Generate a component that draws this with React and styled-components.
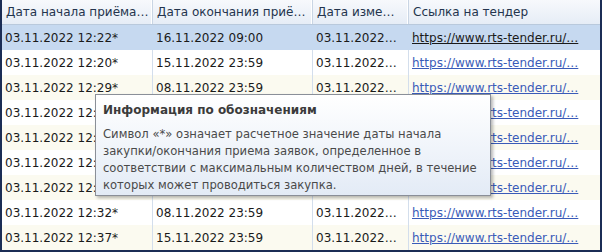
import React from "react";
import styled, { createGlobalStyle } from "styled-components";

const Global = createGlobalStyle`
  html, body { margin: 0; padding: 0; background: #fff; }
  body { font-family: "DejaVu Sans", Verdana, sans-serif; }
`;

const Frame = styled.div`
  position: relative;
  width: 602px;
  height: 252px;
  box-sizing: border-box;
  border: 2px solid #1b2d55;
  border-top: none;
  overflow: hidden;
  background: #fff;
`;

const COLS = "151px 160px 96px 1fr";

const HeaderRow = styled.div`
  display: grid;
  grid-template-columns: ${COLS};
  height: 24px;
  background: linear-gradient(#f7f9fc, #e6edf6);
  border-bottom: 1px solid #b9c9dc;
`;

const HeaderCell = styled.div`
  display: flex;
  align-items: center;
  padding-left: 4px;
  font-size: 12px;
  color: #24344d;
  white-space: nowrap;
  overflow: hidden;
  border-right: 1px solid #c9d5e4;
  box-shadow: inset -1px 0 0 #fff;
  &:last-child { border-right: none; box-shadow: none; }
`;

const Row = styled.div`
  display: grid;
  grid-template-columns: ${COLS};
  height: 25px;
  background: ${(p) => (p.$selected ? "#c6d9f0" : p.$alt ? "#fbfaf0" : "#ffffff")};
`;

const Cell = styled.div`
  display: flex;
  align-items: center;
  padding-left: 3px;
  font-size: 12px;
  color: #1a1a1a;
  white-space: nowrap;
  overflow: hidden;
  border-right: 1px solid ${(p) => (p.$selected ? "#c6d9f0" : "#d3deec")};
  &:last-child { border-right: none; }
`;

const Link = styled.span`
  color: ${(p) => (p.$selected ? "#1a1a1a" : "#3a5bb8")};
  text-decoration: underline;
`;

const Tooltip = styled.div`
  position: absolute;
  left: 93px;
  top: 94px;
  width: 396px;
  height: 102px;
  box-sizing: border-box;
  padding: 7px 6px 0 7px;
  border: 1px solid #8a8f98;
  background: linear-gradient(#ffffff, #e3ebf6);
  box-shadow: 2px 2px 3px rgba(0, 0, 0, 0.28);
  white-space: nowrap;
  overflow: hidden;
`;

const TipTitle = styled.div`
  font-size: 12px;
  font-weight: bold;
  color: #3b3b3b;
  line-height: 17px;
  margin-bottom: 7px;
`;

const TipBody = styled.div`
  font-size: 11.6px;
  color: #4a4a4a;
  line-height: 17px;
`;

const rows = [
  ["03.11.2022 12:22*", "16.11.2022 09:00"],
  ["03.11.2022 12:20*", "15.11.2022 23:59"],
  ["03.11.2022 12:29*", "08.11.2022 23:59"],
  ["03.11.2022 12:30*", "15.11.2022 23:59"],
  ["03.11.2022 12:31*", "15.11.2022 23:59"],
  ["03.11.2022 12:31*", "08.11.2022 23:59"],
  ["03.11.2022 12:32*", "15.11.2022 23:59"],
  ["03.11.2022 12:32*", "08.11.2022 23:59"],
  ["03.11.2022 12:37*", "15.11.2022 23:59"],
];

export default function App() {
  return (
    <>
      <Global />
      <Frame>
        <HeaderRow>
          <HeaderCell>Дата начала приёма…</HeaderCell>
          <HeaderCell>Дата окончания приё…</HeaderCell>
          <HeaderCell>Дата изме…</HeaderCell>
          <HeaderCell>Ссылка на тендер</HeaderCell>
        </HeaderRow>
        {rows.map(([a, b], i) => {
          const sel = i === 0;
          return (
            <Row key={i} $selected={sel} $alt={i % 2 === 0}>
              <Cell $selected={sel}>{a}</Cell>
              <Cell $selected={sel}>{b}</Cell>
              <Cell $selected={sel}>03.11.2022…</Cell>
              <Cell $selected={sel}>
                <Link $selected={sel}>https://www.rts-tender.ru/…</Link>
              </Cell>
            </Row>
          );
        })}
        <Tooltip>
          <TipTitle>Информация по обозначениям</TipTitle>
          <TipBody>
            Символ «*» означает расчетное значение даты начала
            <br />
            закупки/окончания приема заявок, определенное в
            <br />
            соответствии с максимальным количеством дней, в течение
            <br />
            которых может проводиться закупка.
          </TipBody>
        </Tooltip>
      </Frame>
    </>
  );
}
